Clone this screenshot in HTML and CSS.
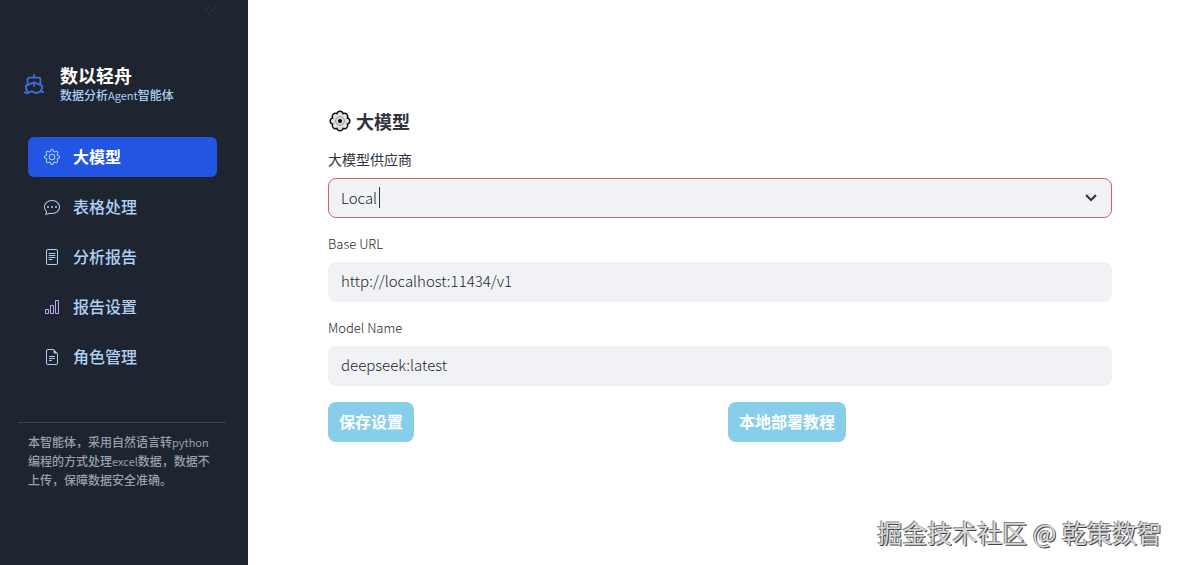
FILE: index.html
```html
<!DOCTYPE html>
<html lang="zh-CN">
<head>
    <meta charset="UTF-8">
    <meta name="viewport" content="width=device-width, initial-scale=1.0">
    <title>数以轻舟</title>
    <link rel="stylesheet" href="styles.css">
</head>
<body>
    <div class="app">
        <aside class="sidebar">
            <button type="button" class="collapse" aria-label="收起侧边栏">
                <svg width="16" height="16" viewBox="0 0 16 16" fill="none" stroke="currentColor" stroke-width="1.5"><path d="M7 3L2 8l5 5M14 3L9 8l5 5"/></svg>
            </button>

            <div class="brand">
                <svg class="brand-icon" width="22" height="22" viewBox="0 0 24 24" fill="none" stroke="currentColor" stroke-width="2" stroke-linecap="round" stroke-linejoin="round">
                    <path d="M12 10.2V14M12 2v3"/>
                    <path d="M19 13V7a2 2 0 0 0-2-2H7a2 2 0 0 0-2 2v6"/>
                    <path d="M19.4 20A11.6 11.6 0 0 0 21 14l-8.2-3.6a2 2 0 0 0-1.6 0L3 14a11.6 11.6 0 0 0 2.8 7.8"/>
                    <path d="M2 21c.6.5 1.200 1 2.500 1 2.500 0 2.500-2 5-2 1.300 0 1.900.5 2.500 1s1.200 1 2.500 1c2.500 0 2.500-2 5-2 1.300 0 1.900.5 2.500 1"/>
                </svg>
                <div class="brand-text">
                    <div class="brand-name">数以轻舟</div>
                    <div class="brand-sub">数据分析<span class="latin">Agent</span>智能体</div>
                </div>
            </div>

            <nav class="menu">
                <a href="#model" class="menu-item active" aria-current="page">
                    <svg width="16" height="16" viewBox="0 0 16 16" fill="currentColor"><path d="M8 4.754a3.246 3.246 0 1 0 0 6.492 3.246 3.246 0 0 0 0-6.492zM5.754 8a2.246 2.246 0 1 1 4.492 0 2.246 2.246 0 0 1-4.492 0z"/><path d="M9.796 1.343c-.527-1.790-3.065-1.790-3.592 0l-.094.319a.873.873 0 0 1-1.255.520l-.292-.160c-1.640-.892-3.433.902-2.540 2.541l.159.292a.873.873 0 0 1-.520 1.255l-.319.094c-1.790.527-1.790 3.065 0 3.592l.319.094a.873.873 0 0 1 .520 1.255l-.160.292c-.892 1.640.901 3.434 2.541 2.540l.292-.159a.873.873 0 0 1 1.255.520l.094.319c.527 1.790 3.065 1.790 3.592 0l.094-.319a.873.873 0 0 1 1.255-.520l.292.160c1.640.893 3.434-.902 2.540-2.541l-.159-.292a.873.873 0 0 1 .520-1.255l.319-.094c1.790-.527 1.790-3.065 0-3.592l-.319-.094a.873.873 0 0 1-.520-1.255l.160-.292c.893-1.640-.902-3.433-2.541-2.540l-.292.159a.873.873 0 0 1-1.255-.520l-.094-.319zm-2.633.283c.246-.835 1.428-.835 1.674 0l.094.319a1.873 1.873 0 0 0 2.693 1.115l.291-.160c.764-.415 1.600.420 1.184 1.185l-.159.292a1.873 1.873 0 0 0 1.116 2.692l.318.094c.835.246.835 1.428 0 1.674l-.319.094a1.873 1.873 0 0 0-1.115 2.693l.160.291c.415.764-.420 1.600-1.185 1.184l-.291-.159a1.873 1.873 0 0 0-2.693 1.116l-.094.318c-.246.835-1.428.835-1.674 0l-.094-.319a1.873 1.873 0 0 0-2.692-1.115l-.292.160c-.764.415-1.600-.420-1.184-1.185l.159-.291A1.873 1.873 0 0 0 1.945 8.930l-.319-.094c-.835-.246-.835-1.428 0-1.674l.319-.094A1.873 1.873 0 0 0 3.060 4.377l-.160-.292c-.415-.764.420-1.600 1.185-1.184l.292.159a1.873 1.873 0 0 0 2.692-1.115l.094-.319z"/></svg>
                    <span>大模型</span>
                </a>
                <a href="#table" class="menu-item">
                    <svg width="16" height="16" viewBox="0 0 16 16" fill="currentColor"><path d="M5 8a1 1 0 1 1-2 0 1 1 0 0 1 2 0zm4 0a1 1 0 1 1-2 0 1 1 0 0 1 2 0zm3 1a1 1 0 1 0 0-2 1 1 0 0 0 0 2z"/><path d="m2.165 15.803.020-.004c1.830-.363 2.948-.842 3.468-1.105A9.060 9.060 0 0 0 8 15c4.418 0 8-3.134 8-7s-3.582-7-8-7-8 3.134-8 7c0 1.760.743 3.370 1.970 4.600a10.437 10.437 0 0 1-.524 2.318l-.003.011a10.722 10.722 0 0 1-.244.637c-.079.186.074.394.273.362a21.673 21.673 0 0 0 .693-.125zm.800-3.108a1 1 0 0 0-.287-.801C1.618 10.830 1 9.468 1 8c0-3.192 3.004-6 7-6s7 2.808 7 6c0 3.193-3.004 6-7 6a8.060 8.060 0 0 1-2.088-.272 1 1 0 0 0-.711.074c-.387.196-1.240.570-2.634.893a10.970 10.970 0 0 0 .398-2z"/></svg>
                    <span>表格处理</span>
                </a>
                <a href="#report" class="menu-item">
                    <svg width="16" height="16" viewBox="0 0 16 16" fill="currentColor"><path d="M5 4a.5.5 0 0 0 0 1h6a.5.5 0 0 0 0-1H5zm-.5 2.500A.5.5 0 0 1 5 6h6a.5.5 0 0 1 0 1H5a.5.5 0 0 1-.5-.5zM5 8a.5.5 0 0 0 0 1h6a.5.5 0 0 0 0-1H5zm0 2a.5.5 0 0 0 0 1h3a.5.5 0 0 0 0-1H5z"/><path d="M2 2a2 2 0 0 1 2-2h8a2 2 0 0 1 2 2v12a2 2 0 0 1-2 2H4a2 2 0 0 1-2-2V2zm10-1H4a1 1 0 0 0-1 1v12a1 1 0 0 0 1 1h8a1 1 0 0 0 1-1V2a1 1 0 0 0-1-1z"/></svg>
                    <span>分析报告</span>
                </a>
                <a href="#report-settings" class="menu-item">
                    <svg class="icon-chart" width="16" height="16" viewBox="0 0 16 16" fill="currentColor"><path d="M4 11H2v3h2v-3zm5-4H7v7h2V7zm5-5v12h-2V2h2zm-2-1a1 1 0 0 0-1 1v12a1 1 0 0 0 1 1h2a1 1 0 0 0 1-1V2a1 1 0 0 0-1-1h-2zM6 7a1 1 0 0 1 1-1h2a1 1 0 0 1 1 1v7a1 1 0 0 1-1 1H7a1 1 0 0 1-1-1V7zm-5 4a1 1 0 0 1 1-1h2a1 1 0 0 1 1 1v3a1 1 0 0 1-1 1H2a1 1 0 0 1-1-1v-3z"/></svg>
                    <span>报告设置</span>
                </a>
                <a href="#roles" class="menu-item">
                    <svg width="16" height="16" viewBox="0 0 16 16" fill="currentColor"><path d="M5.500 7a.5.5 0 0 0 0 1h5a.5.5 0 0 0 0-1h-5zM5 9.500a.5.5 0 0 1 .5-.5h5a.5.5 0 0 1 0 1h-5a.5.5 0 0 1-.5-.5zm0 2a.5.5 0 0 1 .5-.5h2a.5.5 0 0 1 0 1h-2a.5.5 0 0 1-.5-.5z"/><path d="M9.500 0H4a2 2 0 0 0-2 2v12a2 2 0 0 0 2 2h8a2 2 0 0 0 2-2V4.500L9.500 0zm0 1v2A1.500 1.500 0 0 0 11 4.500h2V14a1 1 0 0 1-1 1H4a1 1 0 0 1-1-1V2a1 1 0 0 1 1-1h5.500z"/></svg>
                    <span>角色管理</span>
                </a>
            </nav>

            <p class="about">本智能体，采用自然语言转<span class="latin">python</span>编程的方式处理<span class="latin">excel</span>数据，数据不上传，保障数据安全准确。</p>
        </aside>

        <main class="content">
            <h1>
                <svg width="23" height="22" viewBox="0 0 23 22">
                    <path d="M8.900 3.600A3.200 3.200 0 0 1 15.100 3.600A3.200 3.200 0 0 1 19.400 7.900A3.200 3.200 0 0 1 19.400 14.100A3.200 3.200 0 0 1 15.100 18.400A3.200 3.200 0 0 1 8.900 18.400A3.200 3.200 0 0 1 4.600 14.100A3.200 3.200 0 0 1 4.600 7.900A3.200 3.200 0 0 1 8.900 3.600Z" fill="#e2e2e2" stroke="#111" stroke-width="1.500"/>
                    <circle cx="12" cy="11" r="4.500" fill="#d4d4d4" stroke="#999"/>
                    <circle cx="12" cy="11" r="2" fill="#000"/>
                </svg>
                大模型
            </h1>

            <form id="modelForm">
                <label for="provider">大模型供应商</label>
                <div class="select-box">
                    <select id="provider">
                        <option>Local</option>
                    </select>
                    <span class="caret"></span>
                    <svg class="chevron" width="12" height="8" viewBox="0 0 12 8" fill="none" stroke="currentColor" stroke-width="2"><path d="M1 1l5 5 5-5"/></svg>
                </div>

                <label for="baseUrl" class="label-en">Base URL</label>
                <input type="text" id="baseUrl" value="http://localhost:11434/v1">

                <label for="modelName" class="label-en">Model Name</label>
                <input type="text" id="modelName" value="deepseek:latest">

                <div class="actions">
                    <button type="submit">保存设置</button>
                    <button type="button">本地部署教程</button>
                </div>
            </form>
        </main>

        <div class="watermark">掘金技术社区 @ 乾策数智</div>
    </div>
</body>
</html>
```
FILE: styles.css
```css
* {
    box-sizing: border-box;
}

body {
    margin: 0;
    background: #fff;
    color: #31333f;
    font-family: "Noto Sans CJK SC", sans-serif;
}

.app {
    display: flex;
    min-height: 100vh;
    position: relative;
}

/* Sidebar */
.sidebar {
    width: 248px;
    flex-shrink: 0;
    background: #1e2530;
}

.collapse {
    display: block;
    margin: 2px 29px 0 auto;
    padding: 0;
    height: 16px;
    border: none;
    background: none;
    color: #29303c;
}

.brand {
    display: flex;
    align-items: center;
    gap: 15px;
    margin-top: 46px;
    padding-left: 23px;
}

.brand-icon {
    color: #3d70dc;
}

.brand-name {
    color: #fff;
    font-size: 18px;
    font-weight: 700;
    line-height: 22px;
}

.brand-sub {
    color: #a9cdf2;
    font-size: 12px;
    font-weight: 500;
    line-height: 18px;
}

.latin {
    font-size: 11px;
    font-weight: 400;
    line-height: 1;
}

.menu {
    display: flex;
    flex-direction: column;
    gap: 10px;
    margin: 33px 31px 0 28px;
}

.menu-item {
    display: flex;
    align-items: center;
    gap: 13px;
    height: 40px;
    padding: 0 16px;
    border-radius: 6px;
    color: #aed0f4;
    font-size: 16px;
    font-weight: 500;
    text-decoration: none;
}

.menu-item span {
    padding-bottom: 2px;
}

.menu-item.active {
    background: #2155e2;
    font-weight: 700;
}

.menu-item.active span {
    color: #fff;
}

.icon-chart {
    color: #bfa5f5;
}

.about {
    margin: 45px 22px 0 18px;
    padding: 9px 16px 10px 10px;
    border-top: 1px solid #3b424d;
    color: #98a0a9;
    font-size: 12px;
    font-weight: 500;
    line-height: 19px;
}

/* Settings form */
.content {
    flex: 1;
    padding: 107px 68px 0 80px;
}

h1 {
    display: flex;
    align-items: center;
    gap: 5px;
    margin: 0 0 14px;
    font-size: 18px;
    font-weight: 700;
    line-height: 28px;
}

label {
    display: block;
    margin-bottom: 9px;
    font-size: 14px;
    line-height: 20px;
}

.label-en {
    margin-bottom: 8px;
    color: #1c1e28;
    font-size: 13px;
    font-weight: 300;
}

input,
select {
    display: block;
    width: 100%;
    height: 40px;
    margin-bottom: 16px;
    padding: 0 13px 3px;
    border: none;
    border-radius: 8px;
    background: #f0f2f6;
    color: #1c1e28;
    font-family: inherit;
    font-size: 15px;
    font-weight: 300;
    outline: none;
}

.select-box {
    position: relative;
}

select {
    appearance: none;
    padding: 0 12px 2px;
    border: 1px solid #d95f66;
}

.caret {
    position: absolute;
    left: 51px;
    top: 9px;
    width: 1px;
    height: 21px;
    background: #31333f;
}

.chevron {
    position: absolute;
    right: 15px;
    top: 16px;
}

.actions {
    display: grid;
    grid-template-columns: 1fr 1fr;
    gap: 16px;
}

.actions button {
    justify-self: start;
    height: 40px;
    padding: 0 11px 2px;
    border: none;
    border-radius: 8px;
    background: #87ceeb;
    color: #fff;
    font-family: inherit;
    font-size: 16px;
    font-weight: 700;
}

.watermark {
    position: absolute;
    right: 18px;
    bottom: 15px;
    color: #d8d8d8;
    font-size: 25px;
    line-height: 36px;
    text-shadow: 1px 1px 0 #444, -1px -1px 0 #888;
}
```
